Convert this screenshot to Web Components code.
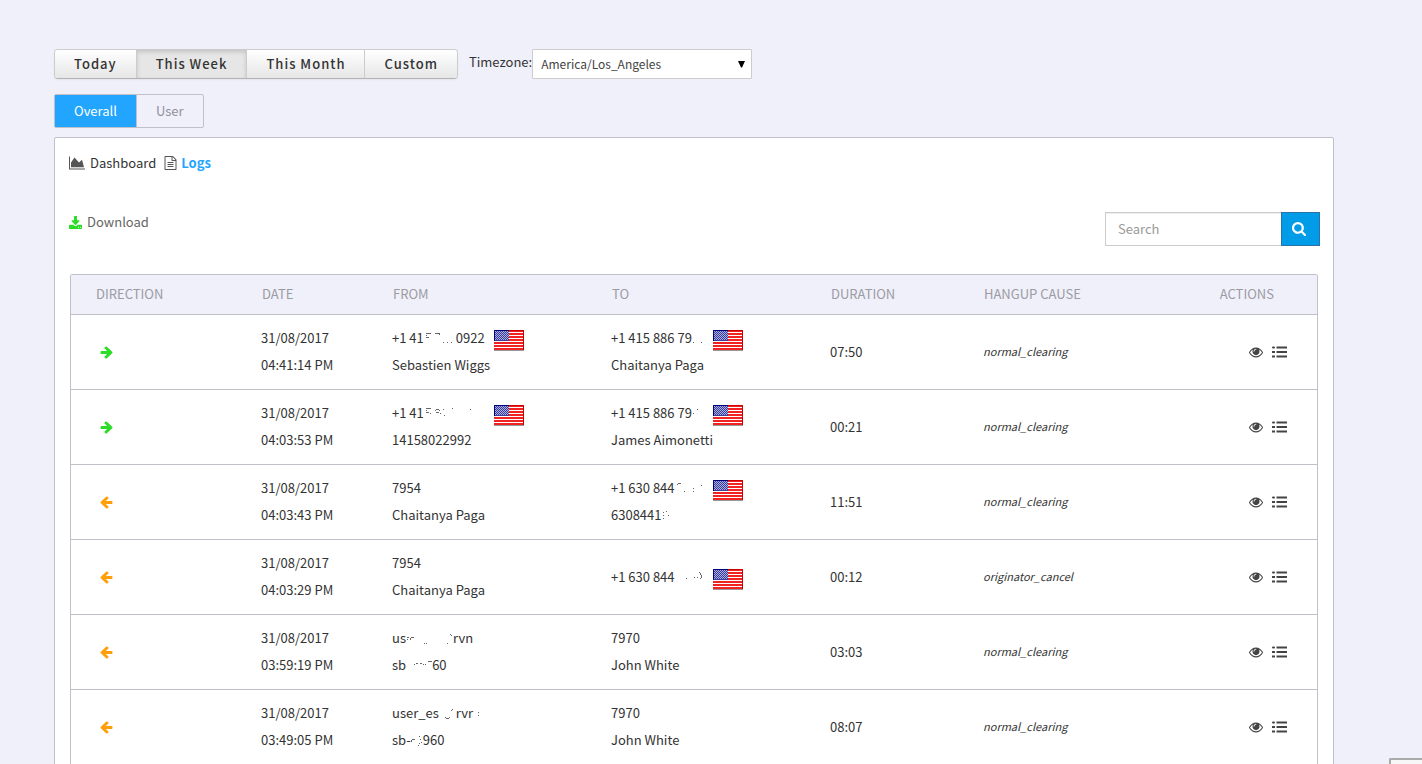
<!DOCTYPE html>
<html lang="en">
<head>
<meta charset="utf-8">
<title>Call logs</title>
<style>
  html { background: #f0f0fa; }
  body { margin: 0; color: #333; font: 13px/20px "Noto Sans CJK SC", "Source Sans Pro", sans-serif; }
</style>
</head>
<body>
<call-logs-app></call-logs-app>

<template id="app-template">
  <style>
    :host { display: block; box-sizing: border-box; height: 100vh; overflow: hidden; padding: 49px 88px 0 54px; }
    .filters { display: flex; align-items: flex-start; gap: 11px; margin-bottom: 15px; }
    .timezone { display: flex; }
    .timezone label { line-height: 26px; }
    select { appearance: none; box-sizing: border-box; width: 220px; height: 30px; padding: 0 8px; border: 1px solid #ccc; border-radius: 1px; color: #444; font: inherit; font-size: 12px; background: #fff; }
    .select { display: grid; align-items: center; }
    .select > * { grid-area: 1 / 1; }
    .select ui-icon { justify-self: end; margin-right: 7px; pointer-events: none; }
    main { display: block; box-sizing: border-box; margin-top: 9px; min-height: 100vh; border: 1px solid #c0c0c9; border-radius: 2px; background: #fff; padding: 15px; }
    nav { display: flex; gap: 8px; margin-left: -1px; }
    nav a, .download { display: flex; align-items: center; gap: 5px; color: #333; text-decoration: none; }
    nav a.active { color: #22a5ff; font-weight: 700; gap: 4px; }
    nav ui-icon { color: #555; }
    .tools { display: flex; justify-content: space-between; align-items: flex-start; margin: 39px -2px 28px -1px; }
    .download { color: #666; }
    .download ui-icon { color: #2bdd26; }
  </style>
  <div class="filters">
    <range-picker></range-picker>
    <div class="timezone">
      <label for="tz">Timezone:</label>
      <div class="select">
        <select id="tz"><option>America/Los_Angeles</option></select>
        <ui-icon name="caret" w="7" h="8"></ui-icon>
      </div>
    </div>
  </div>
  <scope-tabs></scope-tabs>
  <main>
    <nav>
      <a href="#dashboard"><ui-icon name="area" w="16" h="14"></ui-icon>Dashboard</a>
      <a href="#logs" class="active"><ui-icon name="file" w="13" h="14"></ui-icon>Logs</a>
    </nav>
    <div class="tools">
      <a class="download" href="#download"><ui-icon name="download" w="13" h="13"></ui-icon>Download</a>
      <search-box></search-box>
    </div>
    <log-table></log-table>
  </main>
  <corner-widget></corner-widget>
</template>

<template id="range-template">
  <style>
    :host { display: flex; border: 1px solid #ccc; border-bottom-color: #b3b3b3; border-radius: 4px; overflow: hidden; box-shadow: 0 1px 2px rgba(0,0,0,.05); }
    button { height: 28px; padding: 0 19px; border: 0; border-right: 1px solid #ccc; background: linear-gradient(#fff, #e6e6e6); color: #333; font: inherit; font-weight: 500; letter-spacing: 1px; }
    button:last-child { border-right: 0; }
    button.active { background: #e6e6e6; box-shadow: inset 0 2px 4px rgba(0,0,0,.15); }
  </style>
  <button type="button">Today</button><button type="button" class="active">This Week</button><button type="button">This Month</button><button type="button">Custom</button>
</template>

<template id="scope-template">
  <style>
    :host { display: flex; width: max-content; border: 1px solid #c0c0c9; border-radius: 2px; }
    button { height: 32px; padding: 0 19px; border: 0; background: transparent; color: #90909c; font: inherit; }
    button.active { background: #22a5ff; color: #fff; border-right: 1px solid #c0c0c9; }
  </style>
  <button type="button" class="active">Overall</button><button type="button">User</button>
</template>

<template id="search-template">
  <style>
    :host { display: flex; height: 34px; }
    input { box-sizing: border-box; width: 176px; padding: 0 12px; border: 1px solid #ccc; border-right: 0; border-radius: 0; background: #fff; box-shadow: inset 0 1px 1px rgba(0,0,0,.075); color: #555; font: inherit; }
    input::placeholder { color: #999; opacity: 1; }
    button { display: flex; align-items: center; justify-content: center; width: 39px; padding: 0 3px 0 0; border: 1px solid #2a72a8; background: #009ce8; color: #fff; }
  </style>
  <input type="text" placeholder="Search" aria-label="Search"><button type="button" aria-label="Run search"><ui-icon name="search" w="14" h="14"></ui-icon></button>
</template>

<template id="table-template">
  <style>
    :host { display: block; }
    table { width: 100%; table-layout: fixed; border: 1px solid #c0c0c9; border-radius: 2px; border-spacing: 0; }
    th { box-sizing: border-box; height: 40px; padding: 0 11px 2px; border-bottom: 1px solid #c0c0c9; background: #f0f0fa; color: #9b9ba3; font-weight: 400; text-align: left; }
    th:first-child { padding-left: 25px; }
    th:last-child { padding-right: 43px; text-align: right; }
    td { box-sizing: border-box; height: 75px; padding: 0 10px 2px; border-bottom: 1px solid #c0c0c9; line-height: 27px; }
    td:first-child { padding: 0 0 0 29px; }
    td:last-child { padding: 0 30px 0 0; }
    td > ui-icon { display: block; }
    .cause { font-size: 11px; font-style: italic; }
    .out { color: #2bdd26; }
    .in { color: #ff9f0a; }
    .actions { display: flex; align-items: center; justify-content: flex-end; gap: 9px; color: #444; }
    a { display: flex; color: inherit; }
  </style>
  <table>
    <colgroup><col style="width:180px"><col style="width:131px"><col style="width:219px"><col style="width:219px"><col style="width:153px"><col style="width:219px"><col style="width:125px"></colgroup>
    <thead><tr><th>DIRECTION</th><th>DATE</th><th>FROM</th><th>TO</th><th>DURATION</th><th>HANGUP CAUSE</th><th>ACTIONS</th></tr></thead>
    <tbody></tbody>
  </table>
</template>

<script>
const ICONS = {
  caret: ['0 0 7 8', '<path d="M0 1h7L4 7.500H3z" fill="#000"/>'],
  area: ['0 64 2048 1664', '<path d="M2048 1536v128h-2048v-1536h128v1408h1920zm-384-1024l256 896h-1664v-576l448-576 576 576z"/>'],
  file: ['64 0 1664 1792', '<path d="M1596 380q28 28 48 76t20 88v1152q0 40-28 68t-68 28h-1344q-40 0-68-28t-28-68v-1600q0-40 28-68t68-28h896q40 0 88 20t76 48zm-444-244v376h376q-10-29-22-41l-313-313q-12-12-41-22zm384 1528v-1024h-416q-40 0-68-28t-28-68v-416h-768v1536h1280zm-1024-864q0-14 9-23t23-9h704q14 0 23 9t9 23v64q0 14-9 23t-23 9h-704q-14 0-23-9t-9-23v-64zm736 224q14 0 23 9t9 23v64q0 14-9 23t-23 9h-704q-14 0-23-9t-9-23v-64q0-14 9-23t23-9h704zm0 256q14 0 23 9t9 23v64q0 14-9 23t-23 9h-704q-14 0-23-9t-9-23v-64q0-14 9-23t23-9h704z"/>'],
  download: ['64 0 1664 1536', '<path d="M1344 1344q0-26-19-45t-45-19-45 19-19 45 19 45 45 19 45-19 19-45zm256 0q0-26-19-45t-45-19-45 19-19 45 19 45 45 19 45-19 19-45zm128-224v320q0 40-28 68t-68 28h-1472q-40 0-68-28t-28-68v-320q0-40 28-68t68-28h465l135 136q58 56 136 56t136-56l136-136h464q40 0 68 28t28 68zm-325-569q17 41-14 70l-448 448q-18 19-45 19t-45-19l-448-448q-31-29-14-70 17-39 59-39h256v-448q0-26 19-45t45-19h256q26 0 45 19t19 45v448h256q42 0 59 39z"/>'],
  search: ['64 128 1664 1664', '<path d="M1216 832q0-185-131.500-316.500t-316.500-131.500-316.500 131.500-131.500 316.500 131.500 316.500 316.500 131.500 316.500-131.500 131.500-316.500zm512 832q0 52-38 90t-90 38q-54 0-90-38l-343-342q-179 124-399 124-143 0-273.500-55.500t-225-150-150-225-55.500-273.500 55.500-273.500 150-225 225-150 273.500-55.500 273.500 55.500 225 150 150 225 55.500 273.500q0 220-124 399l343 343q37 37 37 90z"/>'],
  right: ['64 128 1600 1664', '<path d="M1600 960q0 54-37 91l-651 651q-39 37-91 37-51 0-90-37l-75-75q-38-38-38-91t38-91l293-293h-704q-52 0-84.500-37.500t-32.500-90.500v-128q0-53 32.500-90.500t84.500-37.500h704l-293-294q-38-36-38-90t38-90l75-75q38-38 90-38 53 0 91 38l651 651q37 35 37 90z"/>'],
  eye: ['0 320 1792 1280', '<path d="M1664 960q-152-236-381-353 61 104 61 225 0 185-131.500 316.500t-316.500 131.500-316.500-131.500-131.500-316.500q0-121 61-225-229 117-381 353 133 205 333.500 326.500t434.500 121.500 434.500-121.500 333.500-326.500zm-720-384q0-20-14-34t-34-14q-125 0-214.500 89.500t-89.500 214.500q0 20 14 34t34 14 34-14 14-34q0-86 61-147t147-61q20 0 34-14t14-34zm848 384q0 34-20 69-140 230-376.500 368.500t-499.500 138.500-499.500-139-376.500-368q-20-35-20-69t20-69q140-229 376.500-368t499.500-139 499.500 139 376.500 368q20 35 20 69z"/>'],
  list: ['0 0 15 12', '<path d="M0 1.500a1 1 0 0 1 1-1h1a1 1 0 0 1 1 1 1 1 0 0 1-1 1H1a1 1 0 0 1-1-1zM4.500 .500H15v2H4.500zM0 5h3v2H0zM4.500 5H15v2H4.500zM0 9.500h3v2H0zM4.500 9.500H15v2H4.500z"/>'],
  flag: ['0 0 30 21', '<path fill="#fff" d="M0 0h30v20H0z"/><path fill="#f02222" d="M0 0h30v2H0zM0 3h30v2H0zM0 6h30v2H0zM0 9h30v2H0zM0 12h30v2H0zM0 15h30v2H0zM0 18h30v2H0z"/><path fill="#3a3f9e" d="M0 0h15v11H0z"/><path stroke="#a9abdc" stroke-dasharray="1 1" d="M1 1.500h14M2 2.500h13M1 3.500h14M2 4.500h13M1 5.500h14M2 6.500h13M1 7.500h14M2 8.500h13M1 9.500h14"/><path fill="none" stroke="#00007c" d="M.500 11V.500H15"/><path fill="none" stroke="#c00" d="M15 .500h14.500V20"/><path stroke="#999" d="M0 20.500h30"/>']
};
ICONS.left = [ICONS.right[0], `<g transform="matrix(-1 0 0 1 1728 0)">${ICONS.right[1]}</g>`];

class UiIcon extends HTMLElement {
  connectedCallback() {
    const [box, body] = ICONS[this.getAttribute('name')];
    this.attachShadow({ mode: 'open' }).innerHTML =
      `<style>:host{display:inline-block;flex:none}svg{display:block}</style><svg width="${this.getAttribute('w')}" height="${this.getAttribute('h')}" viewBox="${box}" fill="currentColor" preserveAspectRatio="none" aria-hidden="true">${body}</svg>`;
  }
}
customElements.define('ui-icon', UiIcon);

/* Leftover specks of a redacted stretch: "x y width" triples on a 12px high strip. */
class RedactedBits extends HTMLElement {
  connectedCallback() {
    const d = this.getAttribute('bits').split(',').map(b => { const [x, y, w] = b.trim().split(' '); return `M${x} ${y}h${w}v1h-${w}z`; }).join('');
    this.attachShadow({ mode: 'open' }).innerHTML =
      `<style>:host{display:inline-block;flex:none}svg{display:block}</style><svg width="${this.getAttribute('w')}" height="12" viewBox="0 0 ${this.getAttribute('w')} 12" fill="#666" shape-rendering="crispEdges" aria-hidden="true"><path d="${d}"/></svg>`;
  }
}
customElements.define('redacted-bits', RedactedBits);

/* Caller number line, with its country flag when there is one. */
class CallParty extends HTMLElement {
  connectedCallback() {
    const flag = this.hasAttribute('flag');
    this.attachShadow({ mode: 'open' }).innerHTML =
      `<style>:host{display:flex;align-items:flex-end;height:27px;white-space:nowrap}
       .number{display:inline-flex;align-items:center;${flag ? 'width:92px;margin-right:10px' : ''}}</style><span class="number"><slot></slot></span>${flag ? '<ui-icon name="flag" w="30" h="21"></ui-icon>' : ''}`;
  }
}
customElements.define('call-party', CallParty);

function fromTemplate(tag, id, after) {
  customElements.define(tag, class extends HTMLElement {
    connectedCallback() {
      const root = this.attachShadow({ mode: 'open' });
      root.append(document.getElementById(id).content.cloneNode(true));
      if (after) after(root);
    }
  });
}

const bits = (w, list) => `<redacted-bits w="${w}" bits="${list}"></redacted-bits>`;
const CALLS = [
  ['right', '04:41:14 PM', ['flag', '+1 41' + bits(32, '2 1 5,2 3 1,2 5 3,11 1 5,15 2 1,19 10 1,23 10 1,27 10 1') + '0922', 'Sebastien Wiggs'], ['flag', '+1 415 886 79' + bits(11, '1 10 1,9 10 1'), 'Chaitanya Paga'], '07:50', 'normal_clearing'],
  ['right', '04:03:53 PM', ['flag', '+1 41' + bits(56, '2 1 5,2 3 1,2 5 3,6 6 1,12 2 3,11 3 1,15 3 1,12 5 3,16 6 1,19 2 1,20 8 1,28 1 1,46 2 1'), '14158022992'], ['flag', '+1 415 886 79' + bits(11, '1 6 1,5 2 1'), 'James Aimonetti'], '00:21', 'normal_clearing'],
  ['left', '04:03:43 PM', ['', '7954', 'Chaitanya Paga'], ['flag', '+1 630 844' + bits(28, '3 1 3,2 2 1,9 9 1,18 6 1,18 9 1,26 3 1'), '6308441' + bits(10, '1 3 1,1 6 1,1 9 1,4 2 1,6 6 1')], '11:51', 'normal_clearing'],
  ['left', '04:03:29 PM', ['', '7954', 'Chaitanya Paga'], ['flag', '+1 630 844' + bits(28, '11 8 1,19 7 1,22 7 1,24 2 1,25 3 1,25 4 1,26 5 1,26 6 1,26 7 1,25 8 1')], '00:12', 'originator_cancel'],
  ['left', '03:59:19 PM', ['', 'us' + bits(47, '1 5 2,1 7 1,5 5 3,4 6 1,4 7 1,18 11 1,20 11 1,41 11 1,44 2 1,45 3 1') + 'rvn', 'sb' + bits(26, '8 5 1,10 4 2,14 4 2,17 5 1,19 5 1,22 2 4') + '60'], ['', '7970', 'John White'], '03:03', 'normal_clearing'],
  ['left', '03:49:05 PM', ['', 'user_es' + bits(17, '6 10 1,7 11 3,10 10 1,12 3 1,13 2 1') + 'rvr' + bits(8, '5 5 1,5 8 1'), 'sb-' + bits(12, '1 5 3,0 6 1,0 7 1,8 2 1,9 5 1,8 9 1,7 11 1,10 8 1') + '960'], ['', '7970', 'John White'], '08:07', 'normal_clearing']
];
const party = ([flag, ...lines]) => lines.map((l, i) => `<call-party ${flag && !i ? 'flag' : ''}>${l}</call-party>`).join('');

fromTemplate('range-picker', 'range-template');
fromTemplate('scope-tabs', 'scope-template');
fromTemplate('search-box', 'search-template');
fromTemplate('log-table', 'table-template', root => {
  root.querySelector('tbody').innerHTML = CALLS.map(([dir, time, from, to, duration, cause]) => `<tr>
    <td class="${dir === 'right' ? 'out' : 'in'}"><ui-icon name="${dir}" w="13" h="13"></ui-icon></td>
    <td>31/08/2017<br>${time}</td><td>${party(from)}</td><td>${party(to)}</td><td>${duration}</td><td class="cause">${cause}</td>
    <td><div class="actions"><a href="#details" aria-label="Details"><ui-icon name="eye" w="14" h="11"></ui-icon></a><a href="#legs" aria-label="Legs"><ui-icon name="list" w="15" h="12"></ui-icon></a></div></td></tr>`).join('');
});
customElements.define('corner-widget', class extends HTMLElement {
  connectedCallback() {
    this.attachShadow({ mode: 'open' }).innerHTML =
      '<style>:host{position:fixed;right:0;bottom:0;box-sizing:border-box;width:33px;height:6px;border:2px solid #aaa;border-width:2px 0 0 2px;border-radius:2px 0 0 0;background:#f7f7f7}</style>';
  }
});
fromTemplate('call-logs-app', 'app-template');
</script>
</body>
</html>
